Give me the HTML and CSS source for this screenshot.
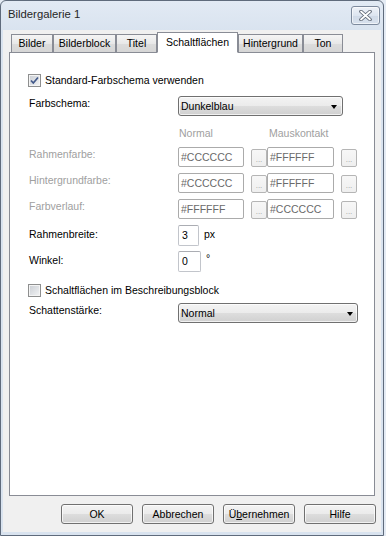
FILE: index.html
```html
<!DOCTYPE html>
<html lang="de">
<head>
  <meta charset="UTF-8">
  <title>Bildergalerie 1</title>
  <link rel="stylesheet" href="styles.css">
</head>
<body>
  <div class="window">
    <div class="titlebar">
      <span class="title">Bildergalerie 1</span>
      <div class="close">
        <svg width="13" height="11" viewBox="0 0 13 11">
          <path d="M2 1.5 L11 9.5 M11 1.5 L2 9.5" stroke="#5b6472" stroke-width="3.6" stroke-linecap="round"/>
          <path d="M2 1.5 L11 9.5 M11 1.5 L2 9.5" stroke="#ffffff" stroke-width="1.8" stroke-linecap="round"/>
        </svg>
      </div>
    </div>

    <div class="client">
      <div class="tabs">
        <div class="tab" style="width:42px">Bilder</div>
        <div class="tab" style="width:63px">Bilderblock</div>
        <div class="tab" style="width:41px">Titel</div>
        <div class="tab active" style="width:81px">Schaltflächen</div>
        <div class="tab" style="width:65px">Hintergrund</div>
        <div class="tab" style="width:40px">Ton</div>
      </div>

      <div class="panel">
        <div class="check-row">
          <span class="checkbox">
            <svg width="11" height="11" viewBox="0 0 11 11">
              <path d="M2 5.5 L4.3 8 L9 2.5" fill="none" stroke="#42598a" stroke-width="1.7"/>
            </svg>
          </span>
          Standard-Farbschema verwenden
        </div>

        <div class="row r-scheme">
          <span class="label">Farbschema:</span>
          <div class="combo combo-scheme">Dunkelblau<span class="arrow"></span></div>
        </div>

        <div class="row r-head">
          <span class="label"></span>
          <span class="col-head">Normal</span>
          <span class="col-head">Mauskontakt</span>
        </div>

        <div class="row r-color first">
          <span class="label disabled">Rahmenfarbe:</span>
          <span class="field">#CCCCCC</span>
          <span class="dots">...</span>
          <span class="field field-2">#FFFFFF</span>
          <span class="dots">...</span>
        </div>

        <div class="row r-color">
          <span class="label disabled">Hintergrundfarbe:</span>
          <span class="field">#CCCCCC</span>
          <span class="dots">...</span>
          <span class="field field-2">#FFFFFF</span>
          <span class="dots">...</span>
        </div>

        <div class="row r-color">
          <span class="label disabled">Farbverlauf:</span>
          <span class="field">#FFFFFF</span>
          <span class="dots">...</span>
          <span class="field field-2">#CCCCCC</span>
          <span class="dots">...</span>
        </div>

        <div class="row r-width">
          <span class="label pad">Rahmenbreite:</span>
          <span class="num">3</span>
          <span class="unit">px</span>
        </div>

        <div class="row r-angle">
          <span class="label pad">Winkel:</span>
          <span class="num num-wide">0</span>
          <span class="unit deg">°</span>
        </div>

        <div class="check-row r-check2">
          <span class="checkbox"></span>
          Schaltflächen im Beschreibungsblock
        </div>

        <div class="row r-shadow">
          <span class="label">Schattenstärke:</span>
          <div class="combo combo-shadow">Normal<span class="arrow"></span></div>
        </div>
      </div>

      <div class="buttons">
        <div class="btn">OK</div>
        <div class="btn">Abbrechen</div>
        <div class="btn">Ü<u>b</u>ernehmen</div>
        <div class="btn">Hilfe</div>
      </div>
    </div>
  </div>
</body>
</html>
```

FILE: styles.css
```css
:root {
  --frame: #d9e3ef;
  --client: #f0f0f0;
  --tab-border: #898c95;
  --btn-border: #707070;
  --disabled: #a0a0a0;
}

body {
  margin: 0;
  background: #e4ebf4;
  font-family: 'Liberation Sans', Arial, sans-serif;
  font-size: 10.5px;
  color: #000;
}

.window {
  width: 384px;
  height: 536px;
  box-sizing: border-box;
  border: 1px solid #5f6b7c;
  border-radius: 6px 6px 0 0;
  background: linear-gradient(#e2eaf4, var(--frame) 30px);
  padding: 0 2px 3px 2px;
  display: flex;
  flex-direction: column;
}

.titlebar {
  height: 29px;
  flex-shrink: 0;
  display: flex;
  align-items: center;
  justify-content: space-between;
  padding: 0 1px 3px 5px;
  box-sizing: border-box;
}

.title {
  font-size: 11.3px;
  color: #262626;
}

.close {
  width: 29px;
  height: 19px;
  box-sizing: border-box;
  border: 1px solid #7d8a9d;
  border-radius: 3px;
  background: linear-gradient(#eef2f8, #dde5f0 50%, #d0dae8 51%, #d8e1ed);
  box-shadow: inset 0 0 0 1px rgba(255, 255, 255, 0.6);
  display: flex;
  align-items: center;
  justify-content: center;
  margin-top: 3px;
}

.client {
  flex: 1;
  background: var(--client);
  padding: 2px 6px 0 6px;
}

/* tabs */
.tabs {
  display: flex;
  align-items: flex-end;
  height: 21px;
  margin: 0 0 -1px 2px;
  position: relative;
  z-index: 1;
}

.tab {
  height: 19px;
  box-sizing: border-box;
  border: 1px solid var(--tab-border);
  background: linear-gradient(#f5f5f5, #e8e8e8 50%, #dcdcdc 51%, #d6d6d6);
  display: flex;
  align-items: center;
  justify-content: center;
  padding-bottom: 1px;
}

.tab.active {
  height: 21px;
  background: #fff;
  border-bottom-color: #fff;
  padding-bottom: 2px;
}

.panel {
  height: 444px;
  box-sizing: border-box;
  border: 1px solid var(--tab-border);
  background: #fff;
  padding: 20px 0 0 19px;
}

/* rows */
.row {
  display: flex;
  align-items: flex-start;
}

.label {
  width: 149px;
  flex-shrink: 0;
  line-height: 14px;
}

.label.pad {
  padding-top: 2px;
}

.disabled,
.col-head {
  color: var(--disabled);
}

.check-row {
  display: flex;
  align-items: center;
  height: 14px;
  gap: 4px;
  margin-left: -1px;
}

.checkbox {
  width: 13px;
  height: 13px;
  box-sizing: border-box;
  border: 1px solid #8e8f8f;
  background: linear-gradient(135deg, #c9cdd3, #f3f4f5);
  box-shadow: inset 0 0 0 1px #f4f4f4;
  display: flex;
  align-items: center;
  justify-content: center;
}

.r-scheme { margin-top: 9px; }
.r-head { margin-top: 10px; height: 14px; }
.r-color.first { margin-top: 7px; }
.r-color { margin-top: 6px; height: 20px; }
.r-width { margin-top: 6px; }
.r-angle { margin-top: 5px; }
.r-check2 { margin-top: 11px; }
.r-shadow { margin-top: 6px; }

.col-head {
  line-height: 14px;
  width: 89px;
  padding-left: 1px;
}

/* combo boxes and buttons */
.combo,
.btn {
  box-sizing: border-box;
  height: 20px;
  border: 1px solid var(--btn-border);
  border-radius: 3px;
  background: linear-gradient(#f3f3f3, #ebebeb 50%, #dddddd 51%, #d0d0d0);
  box-shadow: inset 0 0 0 1px rgba(255, 255, 255, 0.7);
}

.combo {
  display: flex;
  align-items: center;
  justify-content: space-between;
  padding: 0 5px 0 2px;
}

.combo-scheme { width: 165px; }
.combo-shadow { width: 180px; padding-right: 4px; }

.arrow {
  width: 0;
  height: 0;
  border-left: 3.5px solid transparent;
  border-right: 3.5px solid transparent;
  border-top: 4px solid #000;
  margin-top: 1px;
}

.field {
  box-sizing: border-box;
  width: 66px;
  height: 20px;
  border: 1px solid #ababab;
  border-radius: 2px;
  padding-left: 2px;
  line-height: 18px;
  color: #6a6a6a;
  margin-right: 7px;
}

.field-2 {
  width: 67px;
}

.dots {
  box-sizing: border-box;
  width: 16px;
  height: 18px;
  margin-top: 2px;
  border: 1px solid #b5b5b5;
  border-radius: 2px;
  background: linear-gradient(#f7f7f7, #efefef);
  color: var(--disabled);
  font-size: 8px;
  text-align: center;
  line-height: 20px;
}

.num {
  box-sizing: border-box;
  width: 21px;
  height: 21px;
  border: 1px solid #c2c5cb;
  border-top-color: #abadb3;
  border-radius: 2px;
  padding-left: 3px;
  line-height: 19px;
  background: #fff;
}

.num-wide { width: 23px; }

.unit {
  margin-left: 5px;
  line-height: 14px;
  padding-top: 2px;
}

.unit.deg {
  padding-top: 0;
}

.buttons {
  display: flex;
  justify-content: flex-end;
  gap: 9px;
  margin: 8px -1px 0 0;
}

.btn {
  width: 72px;
  display: flex;
  align-items: center;
  justify-content: center;
}

.btn u {
  text-underline-offset: 1px;
}
```
